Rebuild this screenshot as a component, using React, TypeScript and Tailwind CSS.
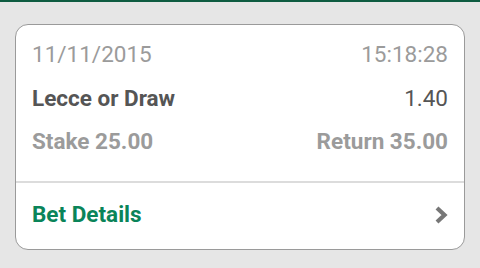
const ChevronRight = () => (
  <svg width="16" height="20" viewBox="0 0 16 20" className="text-[#777]">
    <path d="M4 3 L11.5 10 L4 17" fill="none" stroke="currentColor" strokeWidth="4.2" strokeLinejoin="miter" />
  </svg>
);

const App = () => {
  return (
    <div className="w-[480px] h-[268px] bg-[#e6e6e6] font-['Roboto',sans-serif] flex flex-col">
      <div className="h-[2px] bg-[#0e5c41]" />
      <div className="mx-[15px] mt-[22px] h-[226px] bg-white border border-[#9a9a9a] rounded-[13px] flex flex-col">
        <div className="px-4 pt-2 text-[22.5px]">
          <div className="h-11 flex items-center justify-between text-[#9b9b9b]">
            <span>11/11/2015</span>
            <span>15:18:28</span>
          </div>
          <div className="h-[43px] flex items-center justify-between text-[#555]">
            <span className="font-bold">Lecce or Draw</span>
            <span>1.40</span>
          </div>
          <div className="h-11 flex items-center justify-between text-[#9b9b9b] font-bold">
            <span>Stake 25.00</span>
            <span>Return 35.00</span>
          </div>
        </div>
        <div className="mt-[17px] h-[2px] bg-[#dcdcdc]" />
        <div className="flex-1 pl-4 pr-[15px] pb-[3px] flex items-center justify-between">
          <span className="text-[22.5px] font-bold text-[#0a8459]">Bet Details</span>
          <ChevronRight />
        </div>
      </div>
    </div>
  );
};

export default App;
